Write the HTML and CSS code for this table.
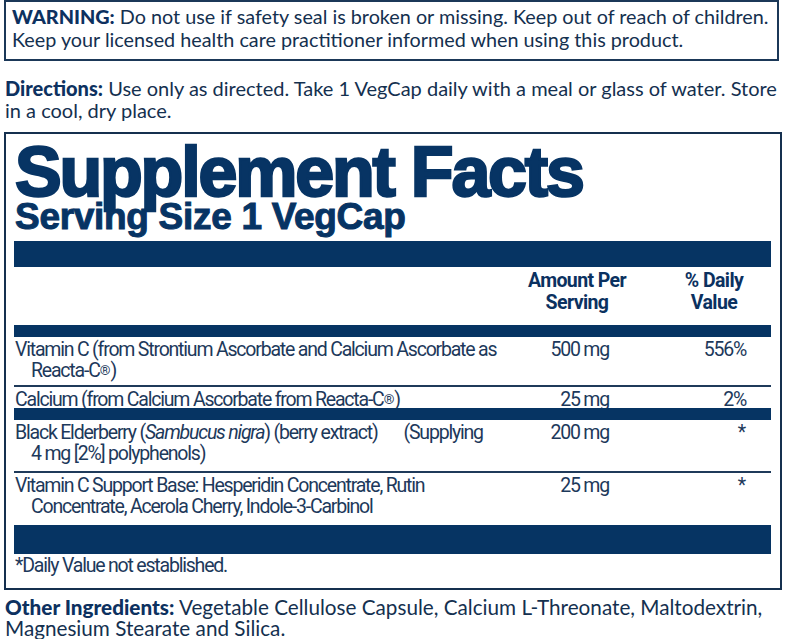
FILE: index.html
```html
<!DOCTYPE html>
<html lang="en">
<head>
<meta charset="utf-8">
<title>Supplement Facts</title>
<link rel="stylesheet" href="styles.css">
</head>
<body>
<div class="label">
  <div class="warning">
    <p><b>WARNING:</b> Do not use if safety seal is broken or missing. Keep out of reach of children.<br>Keep your licensed health care practitioner informed when using this product.</p>
  </div>
  <p class="directions"><b>Directions:</b> Use only as directed. Take 1 VegCap daily with a meal or glass of water. Store<br>in a cool, dry place.</p>

  <section class="facts">
    <h1 class="facts-title">Supplement Facts</h1>
    <h2 class="serving">Serving Size 1 VegCap</h2>
    <div class="bar bar-lg"></div>
    <div class="row head">
      <div class="name"></div>
      <div class="amt">Amount Per<br>Serving</div>
      <div class="dv">% Daily<br>Value</div>
    </div>
    <div class="bar bar-md"></div>
    <div class="row r1">
      <div class="name">Vitamin C (from Strontium Ascorbate and Calcium Ascorbate as Reacta-C<span class="reg">®</span>)</div>
      <div class="amt">500 mg</div>
      <div class="dv">556%</div>
    </div>
    <div class="rule"></div>
    <div class="row tight">
      <div class="name">Calcium (from Calcium Ascorbate from Reacta-C<span class="reg">®</span>)</div>
      <div class="amt">25 mg</div>
      <div class="dv">2%</div>
    </div>
    <div class="bar bar-md"></div>
    <div class="row r3">
      <div class="name">Black Elderberry (<i>Sambucus nigra</i>) (berry extract)<span class="gap"></span>(Supplying 4&nbsp;mg [2%] polyphenols)</div>
      <div class="amt">200 mg</div>
      <div class="dv star">*</div>
    </div>
    <div class="rule"></div>
    <div class="row r4">
      <div class="name">Vitamin C Support Base: Hesperidin Concentrate, Rutin Concentrate, Acerola Cherry, Indole-3-Carbinol</div>
      <div class="amt">25 mg</div>
      <div class="dv star">*</div>
    </div>
    <div class="bar bar-xl"></div>
    <p class="note">*Daily Value not established.</p>
  </section>

  <p class="other"><b>Other Ingredients:</b> Vegetable Cellulose Capsule, Calcium L-Threonate, Maltodextrin, Magnesium Stearate and Silica.</p>
</div>
</body>
</html>
```

FILE: styles.css
```css
* { box-sizing: border-box; }

html, body {
  margin: 0;
  padding: 0;
  background: #ffffff;
}

.label {
  width: 803px;
  padding: 0 0 0 4px;
  color: #14304f;
  font-family: "Lato", "Open Sans", sans-serif;
  font-size: 20px;
}

.label p { margin: 0; }

.label b {
  font-weight: 900;
  color: #0d3160;
}

.warning {
  width: 775px;
  border: 2px solid #1b3858;
  padding: 3px 0 8px 6px;
  line-height: 23px;
}

.warning p {
  font-size: 19.8px;
  margin-right: -16px !important;
  white-space: nowrap;
}

.directions {
  margin-top: 16px !important;
  padding-left: 1px;
  line-height: 22px;
  width: 795px;
}

.facts {
  margin-top: 11px;
  width: 778px;
  border: 2px solid #15304f;
  padding: 8px 9px 12px 8px;
  font-family: "Roboto", "Liberation Sans", sans-serif;
  color: #1d395b;
}

.facts-title {
  margin: 0;
  padding-left: 1px;
  font-family: "Liberation Sans", "Arial", sans-serif;
  font-weight: 700;
  font-size: 70px;
  line-height: 60px;
  letter-spacing: -2.2px;
  color: #073464;
  -webkit-text-stroke: 2.4px #073464;
}

.serving {
  margin: 0;
  padding-left: 1px;
  font-family: "Liberation Sans", "Arial", sans-serif;
  font-weight: 700;
  font-size: 37px;
  line-height: 30px;
  letter-spacing: -0.3px;
  color: #073464;
  -webkit-text-stroke: 1px #073464;
}

.bar { background: #063463; }
.bar-lg { height: 26px; margin-top: 9px; }
.bar-md { height: 12px; }
.bar-xl { height: 29px; }

.rule {
  height: 2px;
  background: #1f3a5a;
}

.row {
  display: grid;
  grid-template-columns: 1fr 120px 134px;
  font-size: 19.5px;
  line-height: 21px;
  letter-spacing: -1.2px;
  padding: 2px 0 4px 0;
}

.row .name {
  padding-left: 17px;
  text-indent: -16px;
  padding-right: 8px;
}

.row.head {
  font-weight: 700;
  font-size: 19.5px;
  line-height: 22px;
  letter-spacing: -0.6px;
  color: #0b3160;
  padding: 3px 0 11px 0;
}

.row.head .amt { text-align: center; padding-right: 0; }
.row.head .dv { text-align: center; padding-left: 20px; padding-right: 0; }

.row.tight {
  height: 21px;
  overflow: hidden;
  padding: 2px 0 0 0;
}

.row.r3 { padding-bottom: 7px; }
.row.r4 { padding-bottom: 8px; }

.amt {
  text-align: right;
  padding-right: 28px;
}

.dv {
  text-align: right;
  padding-right: 25px;
}

.star { padding-right: 26px; }

.reg {
  font-size: 0.7em;
  vertical-align: 0.15em;
  letter-spacing: 0;
}

.gap {
  display: inline-block;
  width: 26px;
}

.note {
  font-size: 19.5px;
  line-height: 21px;
  letter-spacing: -1.2px;
  padding-left: 1px;
  padding-top: 1px;
}

.other {
  margin-top: 7px !important;
  padding-left: 1px;
  line-height: 21px;
  font-size: 20.7px;
  width: 790px;
}
```
